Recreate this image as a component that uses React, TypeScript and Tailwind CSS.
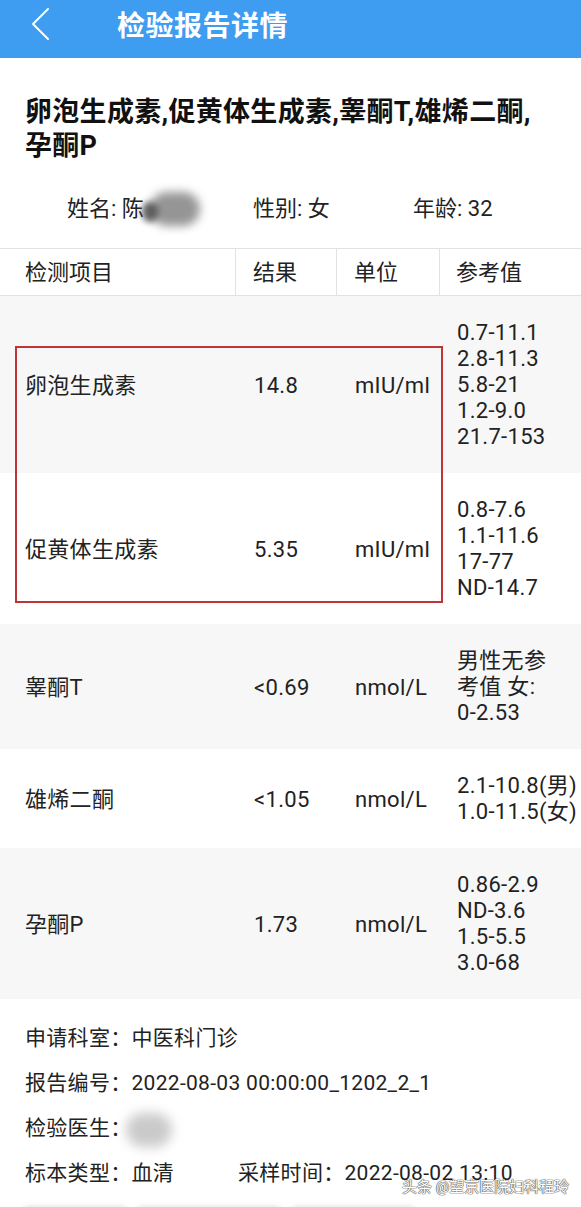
import React from "react";

const FONT = "font-['Roboto','Noto_Sans_CJK_SC',sans-serif]";

type Row = { name: string; result: string; unit: string; refs: string[]; gray: boolean };

const rows: Row[] = [
  { name: "卵泡生成素", result: "14.8", unit: "mIU/ml", refs: ["0.7-11.1", "2.8-11.3", "5.8-21", "1.2-9.0", "21.7-153"], gray: true },
  { name: "促黄体生成素", result: "5.35", unit: "mIU/ml", refs: ["0.8-7.6", "1.1-11.6", "17-77", "ND-14.7"], gray: false },
  { name: "睾酮T", result: "<0.69", unit: "nmol/L", refs: ["男性无参", "考值 女:", "0-2.53"], gray: true },
  { name: "雄烯二酮", result: "<1.05", unit: "nmol/L", refs: ["2.1-10.8(男)", "1.0-11.5(女)"], gray: false },
  { name: "孕酮P", result: "1.73", unit: "nmol/L", refs: ["0.86-2.9", "ND-3.6", "1.5-5.5", "3.0-68"], gray: true },
];

export default function App() {
  return (
    <div className={`${FONT} w-[581px] h-[1207px] overflow-hidden bg-white text-[#1f1f1f] relative`}>
      {/* Top bar */}
      <div className="h-[58px] bg-[#3e9cf1] flex items-center">
        <svg width="58" height="58" viewBox="0 0 58 58" className="shrink-0">
          <polyline points="48,9 33,24 48,39" fill="none" stroke="white" strokeWidth="2" strokeLinecap="round" strokeLinejoin="round" />
        </svg>
        <div className="ml-[59px] text-white text-[28px] font-bold tracking-[0.5px] leading-none -mt-[5px]">检验报告详情</div>
      </div>

      {/* Title */}
      <div className="pt-[37px] pl-[25px] pr-[20px] text-[27px] font-bold leading-[34px] text-[#111] tracking-[0.3px]">
        卵泡生成素,促黄体生成素,睾酮T,雄烯二酮,
        <br />
        孕酮P
      </div>

      {/* Patient info */}
      <div className="mt-[31px] h-[30px] flex items-center text-[22px] leading-[30px] text-[#222]">
        <div className="pl-[67px] w-[253px] flex items-center">
          <span>姓名: 陈</span>
          <span className="relative inline-block w-[52px] h-[30px]">
            <span className="absolute left-[6px] top-[-2px] w-[50px] h-[34px] rounded-full bg-[#8a8a8a] blur-[5px] opacity-90" />
            <span className="absolute left-[-2px] top-[8px] w-[16px] h-[20px] rounded-full bg-[#444] blur-[3px] opacity-80" />
          </span>
        </div>
        <div className="w-[160px]">性别: 女</div>
        <div>年龄: 32</div>
      </div>

      {/* Table header */}
      <div className="mt-[24px] flex h-[48px] border-y border-[#e2e2e2] text-[22px] text-[#222]">
        <div className="w-[236px] pl-[25px] flex items-center border-r border-[#e2e2e2]">检测项目</div>
        <div className="w-[101px] pl-[17px] flex items-center border-r border-[#e2e2e2]">结果</div>
        <div className="w-[103px] pl-[17px] flex items-center border-r border-[#e2e2e2]">单位</div>
        <div className="flex-1 pl-[16px] flex items-center">参考值</div>
      </div>

      {/* Rows */}
      <div className="relative text-[22px] text-[#222] tracking-[0.3px]">
        {rows.map((r) => (
          <div key={r.name} className={`flex items-center pt-[24px] pb-[23px] ${r.gray ? "bg-[#f7f7f7]" : "bg-white"}`}>
            <div className="w-[236px] pl-[25px]">{r.name}</div>
            <div className="w-[101px] pl-[18px]">{r.result}</div>
            <div className="w-[103px] pl-[18px]">{r.unit}</div>
            <div className="flex-1 pl-[17px] leading-[26px] whitespace-nowrap">
              {r.refs.map((t) => (
                <div key={t}>{t}</div>
              ))}
            </div>
          </div>
        ))}
        <div className="absolute left-[15px] top-[50px] w-[428px] h-[257px] border-2 border-[#bf3434] pointer-events-none" />
      </div>

      {/* Footer info */}
      <div className="pl-[25px] pt-[24px] text-[21px] text-[#222] leading-[30px] tracking-[0.3px] flex flex-col gap-[15px]">
        <div>申请科室：中医科门诊</div>
        <div>报告编号：2022-08-03 00:00:00_1202_2_1</div>
        <div className="flex items-center">
          <span>检验医生：</span>
          <span className="relative inline-block w-[50px] h-[30px] -ml-[8px]">
            <span className="absolute left-[2px] top-[0px] w-[46px] h-[34px] rounded-full bg-[#bdbdbd] blur-[6px] opacity-80" />
          </span>
        </div>
        <div className="flex">
          <span className="w-[213px]">标本类型：血清</span>
          <span>采样时间：2022-08-02 13:10</span>
        </div>
      </div>
      <div className="mt-[20px] ml-[25px] flex gap-[14px] blur-[3px] opacity-30">
        <div className="w-[100px] h-[14px] bg-[#555]" />
        <div className="w-[140px] h-[14px] bg-[#555]" />
        <div className="w-[120px] h-[14px] bg-[#555]" />
      </div>

      {/* Watermark */}
      <div className="absolute left-[402px] top-[1177px] text-[15px] leading-[20px] text-white [text-shadow:0_0_1px_#444,0_0_1px_#444,0_0_1px_#444]">
        头条 @望京医院妇科程玲
      </div>
    </div>
  );
}
